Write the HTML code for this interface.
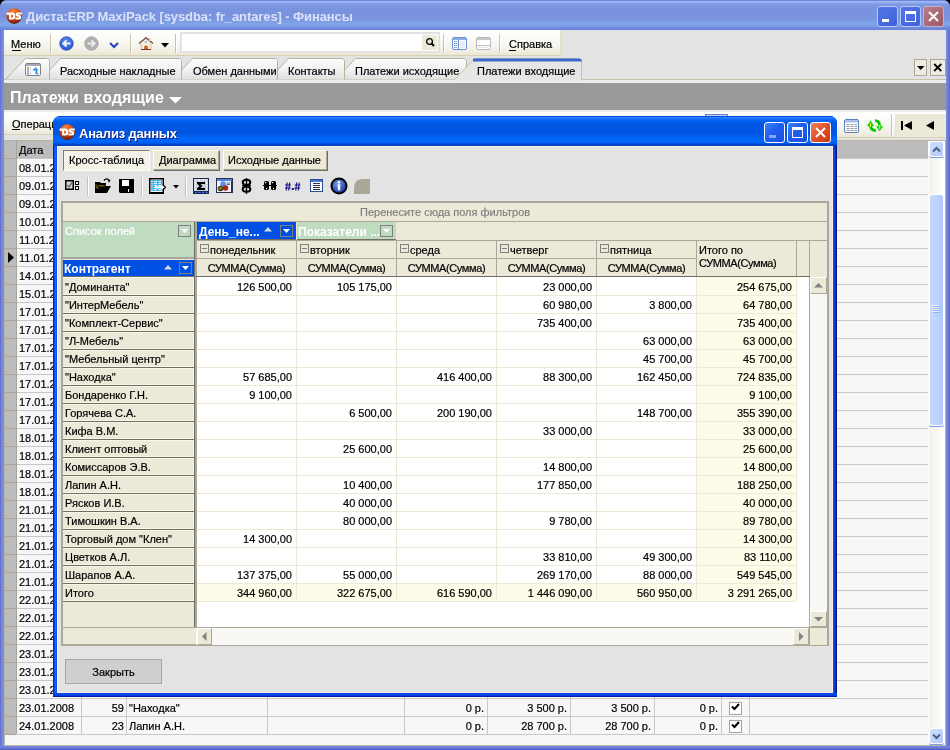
<!DOCTYPE html><html><head><meta charset="utf-8"><style>
*{box-sizing:border-box;margin:0;padding:0}
html,body{width:950px;height:750px;overflow:hidden;background:#fff}
body{position:relative;font:11px "Liberation Sans",sans-serif;color:#000;will-change:transform}
.a{position:absolute}
.t{position:absolute;white-space:pre;line-height:13px;-webkit-text-stroke:0.2px}
.r{text-align:right}
.tb{background:linear-gradient(to bottom,#fefefe 0%,#fbfbf8 35%,#f1efe3 85%,#e9e6d3 100%)}
.sep{position:absolute;width:2px;background:linear-gradient(to right,#c5c2b2 50%,#fff 50%)}
.xb{position:absolute;width:21px;height:21px;border-radius:3px;border:1px solid #fff}
</style></head><body>
<div class="a" style="left:0;top:0;width:950px;height:750px;background:#000"></div>
<div class="a" style="left:0;top:0;width:950px;height:750px;border-radius:7px 7px 0 0;background:linear-gradient(to right,#5868cc 0,#6f80da 1px,#7b8ee0 3px,#7b8ee0 946px,#5a6ad0 950px)"></div>
<div class="a" style="left:0;top:746px;width:950px;height:4px;background:linear-gradient(to bottom,#7486e0 0,#6a7ad8 2px,#4c56bc 4px)"></div>
<div class="a" style="left:0;top:0;width:950px;height:30px;border-radius:7px 7px 0 0;background:linear-gradient(to bottom,#6b86da 0,#6b86da 1px,#a4bcf2 1px,#94aeee 2.5px,#7f9ae4 4px,#7a93df 7px,#7a93df 17px,#7c9ae2 21px,#80a6ea 24px,#7c9ee6 26px,#6f88dc 28px,#6a80d8 30px)"></div>
<svg class="a" style="left:6px;top:8px" width="17" height="17" viewBox="0 0 17 17"><defs><radialGradient id="dsg6_8" cx="0.42" cy="0.2" r="0.8"><stop offset="0" stop-color="#f8843a"/><stop offset="0.55" stop-color="#d24a12"/><stop offset="1" stop-color="#6a1a06"/></radialGradient></defs><circle cx="8.2" cy="8.1" r="7.8" fill="url(#dsg6_8)"/><path d="M0.6 4.6H6.6Q9.3 4.6 9.3 8.1T6.6 11.6H3.1V6.7H0.6z M5.1 6.7V9.5H6.2Q7.1 9.5 7.1 8.1T6.2 6.7z" fill="#fff" fill-rule="evenodd"/><path d="M15.8 4.6H11.6Q9.6 4.6 9.6 6.4T11.6 8.7H12.7Q13.1 8.7 13.1 9.1T12.7 9.6H9.4V11.6H13.2Q15.3 11.6 15.3 9.3T13.2 7H12.3Q11.9 7 11.9 6.7T12.3 6.5H15.8z" fill="#fff"/></svg>
<div class="t" style="left:26px;top:9px;font:bold 13px 'Liberation Sans',sans-serif;line-height:15px;color:#d8e2f8;letter-spacing:-0.1px;-webkit-text-stroke:0">Диста:ERP MaxiPack [sysdba: fr_antares] - Финансы</div>
<div class="xb" style="left:877px;top:6px;background:linear-gradient(135deg,#4f74e4 0%,#4a6ee0 50%,#3d62d8 100%);border-color:#b8c8f4"><div class="a" style="left:4px;top:12px;width:7px;height:3px;background:#fff"></div></div><div class="xb" style="left:900px;top:6px;background:linear-gradient(135deg,#4f74e4 0%,#4a6ee0 50%,#3d62d8 100%);border-color:#b8c8f4"><div class="a" style="left:4px;top:4px;width:11px;height:11px;border:1px solid #fff;border-top-width:3px"></div></div><div class="xb" style="left:923px;top:6px;background:linear-gradient(135deg,#b8808c 0%,#a86670 60%,#9a5a66 100%);border-color:#c8b0c0"><svg class="a" style="left:4px;top:4px" width="11" height="11"><path d="M1 1L10 10M10 1L1 10" stroke="#fff" stroke-width="2"/></svg></div>
<div class="a" style="left:4px;top:30px;width:942px;height:716px;background:#e3e3e3"></div>
<div class="a tb" style="left:4px;top:30px;width:557px;height:26px;border-bottom:1px solid #d8d2b4;border-right:1px solid #e4e0cc"></div>
<div class="t" style="left:11px;top:38px">Меню</div><div class="a" style="left:12px;top:50px;width:9px;height:1px;background:#000"></div>
<div class="sep" style="left:50px;top:34px;height:19px"></div>
<svg class="a" style="left:59px;top:36px" width="16" height="16" viewBox="0 0 16 16"><defs><radialGradient id="bk" cx=".45" cy=".35" r=".75"><stop offset="0" stop-color="#5a8cf0"/><stop offset="1" stop-color="#2050c8"/></radialGradient></defs><circle cx="7.5" cy="7.5" r="6.8" fill="url(#bk)" stroke="#2a48b0" stroke-width=".7"/><path d="M11.5 7.5H4.5M7.5 4.3L4.3 7.5L7.5 10.7" stroke="#f0f4ff" stroke-width="1.9" fill="none"/></svg>
<svg class="a" style="left:84px;top:36px" width="16" height="16" viewBox="0 0 16 16"><circle cx="7.5" cy="7.5" r="6.8" fill="#b0b0b0" stroke="#a0a0a0" stroke-width=".7"/><path d="M3.5 7.5H10.5M7.5 4.3L10.7 7.5L7.5 10.7" stroke="#ececec" stroke-width="1.9" fill="none"/></svg>
<svg class="a" style="left:109px;top:42px" width="10" height="7"><path d="M1 1L5 5L9 1" stroke="#2040c0" stroke-width="2" fill="none"/></svg>
<div class="sep" style="left:130px;top:34px;height:19px"></div>
<svg class="a" style="left:138px;top:37px" width="16" height="13" viewBox="0 0 16 13"><path d="M3 6V12.5H13V6L8 1.5z" fill="#f8ecd8"/><path d="M1 6.5L8 0.8L15 6.5" stroke="#6a4a48" stroke-width="1.4" fill="none"/><rect x="11" y="1" width="2" height="3" fill="#e8d0c0"/><rect x="6.8" y="4" width="2.4" height="2" fill="#a0c8f0"/><path d="M6.2 12.5V9.5Q8 7.5 9.8 9.5V12.5z" fill="#c06020"/><path d="M3 12.5H13" stroke="#8a3020"/><path d="M3 6.5V12M13 6.5V12" stroke="#d8c0a0"/></svg>
<svg class="a" style="left:161px;top:43px" width="8" height="5"><path d="M0 0H8L4 4.5z" fill="#000"/></svg>
<div class="sep" style="left:175px;top:34px;height:19px"></div>
<div class="a" style="left:180px;top:32px;width:260px;height:21px;background:#fff;border:2px solid #e2e2e2"></div>
<div class="a" style="left:422px;top:35px;width:15px;height:15px;background:#ece9d8"></div>
<svg class="a" style="left:425px;top:37px" width="10" height="10"><circle cx="4.5" cy="4.5" r="2.9" stroke="#000" stroke-width="1.3" fill="none"/><path d="M6.5 6.5L9 9" stroke="#000" stroke-width="2"/></svg>
<div class="sep" style="left:443px;top:34px;height:19px"></div>
<svg class="a" style="left:452px;top:37px" width="15" height="13"><rect x=".5" y=".5" width="14" height="12" rx="1.5" fill="#fff" stroke="#6a8ed0"/><rect x="1" y="1" width="13" height="2" fill="#8eacE2"/><path d="M6.5 3V12" stroke="#6a8ed0"/><rect x="8" y="4" width="5" height="7" fill="#e8eef8"/><path d="M2 4.5h1.2M2 6.5h1.2M2 8.5h1.2M2 10.5h1.2" stroke="#3a90f0"/><path d="M3.4 4.5h1.6M3.4 6.5h1.6M3.4 8.5h1.6M3.4 10.5h1.6" stroke="#a0a0a0"/></svg>
<svg class="a" style="left:476px;top:37px" width="15" height="13"><rect x=".5" y=".5" width="14" height="12" rx="1.5" fill="#fdfdfd" stroke="#b8b8b8"/><rect x="1" y="1" width="13" height="2" fill="#c8c8c8"/><path d="M1 8.5H14" stroke="#c0c0c0"/><path d="M3 10.5h9" stroke="#d0d0d0" stroke-dasharray="1 1"/></svg>
<div class="sep" style="left:499px;top:34px;height:19px"></div>
<div class="t" style="left:509px;top:38px">Справка</div><div class="a" style="left:509px;top:50px;width:7px;height:1px;background:#000"></div>
<div class="a" style="left:4px;top:79px;width:942px;height:1px;background:#c8c3a8"></div>
<div class="a" style="left:4px;top:80px;width:942px;height:3px;background:#ededed"></div>
<svg class="a" style="left:335px;top:58px;overflow:visible" width="133" height="23"><defs><linearGradient id="tg" x1="0" y1="0" x2="0" y2="1"><stop offset="0" stop-color="#fcfcfc"/><stop offset=".5" stop-color="#f2f2f2"/><stop offset="1" stop-color="#e0e0e0"/></linearGradient></defs><path d="M0.5 21.5 L20.5 0.5 H129.5 L131.5 2.5 V21.5" fill="url(#tg)" stroke="#b8b29a"/></svg>
<svg class="a" style="left:268px;top:58px;overflow:visible" width="78" height="23"><defs><linearGradient id="tg" x1="0" y1="0" x2="0" y2="1"><stop offset="0" stop-color="#fcfcfc"/><stop offset=".5" stop-color="#f2f2f2"/><stop offset="1" stop-color="#e0e0e0"/></linearGradient></defs><path d="M0.5 21.5 L20.5 0.5 H74.5 L76.5 2.5 V21.5" fill="url(#tg)" stroke="#b8b29a"/></svg>
<svg class="a" style="left:172px;top:58px;overflow:visible" width="107" height="23"><defs><linearGradient id="tg" x1="0" y1="0" x2="0" y2="1"><stop offset="0" stop-color="#fcfcfc"/><stop offset=".5" stop-color="#f2f2f2"/><stop offset="1" stop-color="#e0e0e0"/></linearGradient></defs><path d="M0.5 21.5 L20.5 0.5 H103.5 L105.5 2.5 V21.5" fill="url(#tg)" stroke="#b8b29a"/></svg>
<svg class="a" style="left:40px;top:58px;overflow:visible" width="143" height="23"><defs><linearGradient id="tg" x1="0" y1="0" x2="0" y2="1"><stop offset="0" stop-color="#fcfcfc"/><stop offset=".5" stop-color="#f2f2f2"/><stop offset="1" stop-color="#e0e0e0"/></linearGradient></defs><path d="M0.5 21.5 L20.5 0.5 H139.5 L141.5 2.5 V21.5" fill="url(#tg)" stroke="#b8b29a"/></svg>
<svg class="a" style="left:5px;top:58px;overflow:visible" width="46" height="23"><defs><linearGradient id="tg" x1="0" y1="0" x2="0" y2="1"><stop offset="0" stop-color="#fcfcfc"/><stop offset=".5" stop-color="#f2f2f2"/><stop offset="1" stop-color="#e0e0e0"/></linearGradient></defs><path d="M0.5 21.5 L20.5 0.5 H42.5 L44.5 2.5 V21.5" fill="url(#tg)" stroke="#b8b29a"/></svg>
<svg class="a" style="left:454px;top:58px;overflow:visible" width="129" height="23"><defs><linearGradient id="tg" x1="0" y1="0" x2="0" y2="1"><stop offset="0" stop-color="#fcfcfc"/><stop offset=".5" stop-color="#f2f2f2"/><stop offset="1" stop-color="#e0e0e0"/></linearGradient></defs><path d="M0.5 21.5 L20.5 0.5 H125.5 L127.5 2.5 V21.5" fill="#e6e6e6" stroke="#c8c3a8"/><path d="M19 3.5V0.5H125Q128 0.5 128 3.5z" fill="#3a68cc"/><rect x="1" y="21" width="126" height="2" fill="#e6e6e6"/></svg>
<div class="t" style="left:60px;top:65px">Расходные накладные</div>
<div class="t" style="left:193px;top:65px">Обмен данными</div>
<div class="t" style="left:288px;top:65px">Контакты</div>
<div class="t" style="left:355px;top:65px">Платежи исходящие</div>
<div class="t" style="left:477px;top:65px">Платежи входящие</div>
<svg class="a" style="left:25px;top:63px" width="16" height="13"><rect x=".5" y=".5" width="15" height="12" rx="1.2" fill="#fff" stroke="#808080"/><rect x="1" y="1" width="14" height="2" fill="#a8a8b0"/><circle cx="3" cy="4.9" r=".8" fill="#20a020"/><circle cx="3" cy="6.9" r=".8" fill="#c04040"/><circle cx="3" cy="8.9" r=".8" fill="#4080f0"/><circle cx="3" cy="10.8" r=".8" fill="#404040"/><path d="M4.5 4.9h2M4.5 6.9h1.5M4.5 8.9h2M4.5 10.8h2" stroke="#c8c8c8" stroke-width=".8"/><path d="M7.3 7.5L10.5 4L13.6 7.5H12V9.5L14 11.3H10.5V7.5z" fill="#2888d8"/><path d="M10.5 4.8V9" stroke="#60c8f8" stroke-width=".8"/></svg>
<div class="a" style="left:914px;top:59px;width:13px;height:17px;background:#efecdf;border:1px solid #aca899"></div>
<svg class="a" style="left:917px;top:66px" width="8" height="5"><path d="M0 0H7.5L3.75 4z" fill="#000"/></svg>
<div class="a" style="left:930px;top:59px;width:16px;height:17px;background:#efecdf;border:1px solid #aca899"></div>
<svg class="a" style="left:933px;top:63px" width="10" height="9"><path d="M1.2 1L8.3 8M8.3 1L1.2 8" stroke="#000" stroke-width="1.8"/></svg>
<div class="a" style="left:4px;top:83px;width:942px;height:27px;background:#999999"></div>
<div class="t" style="left:10px;top:89px;font:bold 16px 'Liberation Sans',sans-serif;line-height:18px;color:#fff;-webkit-text-stroke:0;letter-spacing:0.1px">Платежи входящие</div>
<svg class="a" style="left:169px;top:97px" width="14" height="7"><path d="M0 0H13L6.5 6.5z" fill="#fff"/></svg>
<div class="a" style="left:4px;top:110px;width:942px;height:2px;background:#ececec"></div>
<div class="a" style="left:4px;top:135px;width:942px;height:5px;background:#e3e3e3"></div>
<div class="a tb" style="left:4px;top:112px;width:457px;height:23px;border-bottom:1px solid #d8d2b4"></div>
<div class="a tb" style="left:461px;top:112px;width:485px;height:26px;border-bottom:1px solid #d8d2b4"></div>
<div class="sep" style="left:891px;top:114px;height:22px"></div>
<div class="a" style="left:895px;top:114px;width:51px;height:23px;background:linear-gradient(to right,#e8e5d2,#ece9d8 3px)"></div>
<div class="t" style="left:12px;top:118px">Операции</div><div class="a" style="left:12px;top:129px;width:8px;height:1px;background:#000"></div>
<svg class="a" style="left:844px;top:119px" width="15" height="14"><rect x=".5" y=".5" width="14" height="13" rx="1.5" fill="#fff" stroke="#5a80c0"/><rect x="1" y="1" width="13" height="2.5" fill="#a8c0e8"/><path d="M2.5 5.5h3M6.5 5.5h3M10.5 5.5h2.5M2.5 7.5h3M6.5 7.5h3M10.5 7.5h2.5M2.5 9.5h3M6.5 9.5h3M10.5 9.5h2.5M2.5 11.5h3M6.5 11.5h3M10.5 11.5h2.5" stroke="#9098a8"/></svg>
<svg class="a" style="left:862px;top:114px" width="26" height="22" viewBox="0 0 26 22"><path d="M8.5 11.5Q8.5 16.3 13.8 16.5" stroke="#00c800" stroke-width="2.8" fill="none"/><path d="M4.8 12.3L8.5 6.6L12.2 12.3z" fill="#10d010"/><path d="M13.2 6.6Q17.5 6.8 17.7 12" stroke="#00c800" stroke-width="2.8" fill="none"/><path d="M14 12.2L17.6 17.2L21.2 12.2z" fill="#10d010"/><path d="M8.5 9V13" stroke="#c8f800" stroke-width="1.2"/><path d="M17.6 11V15" stroke="#c8f800" stroke-width="1.2"/></svg>
<svg class="a" style="left:901px;top:121px" width="12" height="9"><rect x="0" y="0" width="2" height="9" fill="#000"/><path d="M11 0V9L3 4.5z" fill="#000"/></svg>
<svg class="a" style="left:926px;top:121px" width="9" height="9"><path d="M8 0V9L0 4.5z" fill="#000"/></svg>
<div class="a" style="left:4px;top:140px;width:924px;height:594px;background:#f7f7f7"></div>
<div class="a" style="left:4px;top:140px;width:942px;height:1px;background:#b8b4a0"></div>
<div class="a" style="left:4px;top:141px;width:924px;height:17px;background:#bcbcbc"></div>
<div class="a" style="left:4px;top:141px;width:12px;height:593px;background:#bcbcbc"></div>
<div class="t" style="left:19px;top:144px">Дата</div>
<div class="a" style="left:4px;top:158px;width:12px;height:1px;background:#a8a498"></div>
<div class="a" style="left:17px;top:158px;width:911px;height:1px;background:#c8c8c8"></div>
<div class="a" style="left:4px;top:176px;width:12px;height:1px;background:#a8a498"></div>
<div class="a" style="left:17px;top:176px;width:911px;height:1px;background:#c8c8c8"></div>
<div class="a" style="left:4px;top:194px;width:12px;height:1px;background:#a8a498"></div>
<div class="a" style="left:17px;top:194px;width:911px;height:1px;background:#c8c8c8"></div>
<div class="a" style="left:4px;top:212px;width:12px;height:1px;background:#a8a498"></div>
<div class="a" style="left:17px;top:212px;width:911px;height:1px;background:#c8c8c8"></div>
<div class="a" style="left:4px;top:230px;width:12px;height:1px;background:#a8a498"></div>
<div class="a" style="left:17px;top:230px;width:911px;height:1px;background:#c8c8c8"></div>
<div class="a" style="left:4px;top:248px;width:12px;height:1px;background:#a8a498"></div>
<div class="a" style="left:17px;top:248px;width:911px;height:1px;background:#c8c8c8"></div>
<div class="a" style="left:4px;top:266px;width:12px;height:1px;background:#a8a498"></div>
<div class="a" style="left:17px;top:266px;width:911px;height:1px;background:#c8c8c8"></div>
<div class="a" style="left:4px;top:284px;width:12px;height:1px;background:#a8a498"></div>
<div class="a" style="left:17px;top:284px;width:911px;height:1px;background:#c8c8c8"></div>
<div class="a" style="left:4px;top:302px;width:12px;height:1px;background:#a8a498"></div>
<div class="a" style="left:17px;top:302px;width:911px;height:1px;background:#c8c8c8"></div>
<div class="a" style="left:4px;top:320px;width:12px;height:1px;background:#a8a498"></div>
<div class="a" style="left:17px;top:320px;width:911px;height:1px;background:#c8c8c8"></div>
<div class="a" style="left:4px;top:338px;width:12px;height:1px;background:#a8a498"></div>
<div class="a" style="left:17px;top:338px;width:911px;height:1px;background:#c8c8c8"></div>
<div class="a" style="left:4px;top:356px;width:12px;height:1px;background:#a8a498"></div>
<div class="a" style="left:17px;top:356px;width:911px;height:1px;background:#c8c8c8"></div>
<div class="a" style="left:4px;top:374px;width:12px;height:1px;background:#a8a498"></div>
<div class="a" style="left:17px;top:374px;width:911px;height:1px;background:#c8c8c8"></div>
<div class="a" style="left:4px;top:392px;width:12px;height:1px;background:#a8a498"></div>
<div class="a" style="left:17px;top:392px;width:911px;height:1px;background:#c8c8c8"></div>
<div class="a" style="left:4px;top:410px;width:12px;height:1px;background:#a8a498"></div>
<div class="a" style="left:17px;top:410px;width:911px;height:1px;background:#c8c8c8"></div>
<div class="a" style="left:4px;top:428px;width:12px;height:1px;background:#a8a498"></div>
<div class="a" style="left:17px;top:428px;width:911px;height:1px;background:#c8c8c8"></div>
<div class="a" style="left:4px;top:446px;width:12px;height:1px;background:#a8a498"></div>
<div class="a" style="left:17px;top:446px;width:911px;height:1px;background:#c8c8c8"></div>
<div class="a" style="left:4px;top:464px;width:12px;height:1px;background:#a8a498"></div>
<div class="a" style="left:17px;top:464px;width:911px;height:1px;background:#c8c8c8"></div>
<div class="a" style="left:4px;top:482px;width:12px;height:1px;background:#a8a498"></div>
<div class="a" style="left:17px;top:482px;width:911px;height:1px;background:#c8c8c8"></div>
<div class="a" style="left:4px;top:500px;width:12px;height:1px;background:#a8a498"></div>
<div class="a" style="left:17px;top:500px;width:911px;height:1px;background:#c8c8c8"></div>
<div class="a" style="left:4px;top:518px;width:12px;height:1px;background:#a8a498"></div>
<div class="a" style="left:17px;top:518px;width:911px;height:1px;background:#c8c8c8"></div>
<div class="a" style="left:4px;top:536px;width:12px;height:1px;background:#a8a498"></div>
<div class="a" style="left:17px;top:536px;width:911px;height:1px;background:#c8c8c8"></div>
<div class="a" style="left:4px;top:554px;width:12px;height:1px;background:#a8a498"></div>
<div class="a" style="left:17px;top:554px;width:911px;height:1px;background:#c8c8c8"></div>
<div class="a" style="left:4px;top:572px;width:12px;height:1px;background:#a8a498"></div>
<div class="a" style="left:17px;top:572px;width:911px;height:1px;background:#c8c8c8"></div>
<div class="a" style="left:4px;top:590px;width:12px;height:1px;background:#a8a498"></div>
<div class="a" style="left:17px;top:590px;width:911px;height:1px;background:#c8c8c8"></div>
<div class="a" style="left:4px;top:608px;width:12px;height:1px;background:#a8a498"></div>
<div class="a" style="left:17px;top:608px;width:911px;height:1px;background:#c8c8c8"></div>
<div class="a" style="left:4px;top:626px;width:12px;height:1px;background:#a8a498"></div>
<div class="a" style="left:17px;top:626px;width:911px;height:1px;background:#c8c8c8"></div>
<div class="a" style="left:4px;top:644px;width:12px;height:1px;background:#a8a498"></div>
<div class="a" style="left:17px;top:644px;width:911px;height:1px;background:#c8c8c8"></div>
<div class="a" style="left:4px;top:662px;width:12px;height:1px;background:#a8a498"></div>
<div class="a" style="left:17px;top:662px;width:911px;height:1px;background:#c8c8c8"></div>
<div class="a" style="left:4px;top:680px;width:12px;height:1px;background:#a8a498"></div>
<div class="a" style="left:17px;top:680px;width:911px;height:1px;background:#c8c8c8"></div>
<div class="a" style="left:4px;top:698px;width:12px;height:1px;background:#a8a498"></div>
<div class="a" style="left:17px;top:698px;width:911px;height:1px;background:#c8c8c8"></div>
<div class="a" style="left:4px;top:716px;width:12px;height:1px;background:#a8a498"></div>
<div class="a" style="left:17px;top:716px;width:911px;height:1px;background:#c8c8c8"></div>
<div class="a" style="left:4px;top:734px;width:12px;height:1px;background:#a8a498"></div>
<div class="a" style="left:17px;top:734px;width:911px;height:1px;background:#c8c8c8"></div>
<div class="a" style="left:16px;top:141px;width:1px;height:593px;background:#a8a498"></div>
<div class="a" style="left:81px;top:158px;width:1px;height:576px;background:#c8c8c8"></div>
<div class="a" style="left:126px;top:158px;width:1px;height:576px;background:#c8c8c8"></div>
<div class="a" style="left:267px;top:158px;width:1px;height:576px;background:#c8c8c8"></div>
<div class="a" style="left:404px;top:158px;width:1px;height:576px;background:#c8c8c8"></div>
<div class="a" style="left:487px;top:158px;width:1px;height:576px;background:#c8c8c8"></div>
<div class="a" style="left:570px;top:158px;width:1px;height:576px;background:#c8c8c8"></div>
<div class="a" style="left:654px;top:158px;width:1px;height:576px;background:#c8c8c8"></div>
<div class="a" style="left:721px;top:158px;width:1px;height:576px;background:#c8c8c8"></div>
<div class="a" style="left:749px;top:158px;width:1px;height:576px;background:#c8c8c8"></div>
<div class="t" style="left:19px;top:162px">08.01.2008</div>
<div class="t" style="left:19px;top:180px">09.01.2008</div>
<div class="t" style="left:19px;top:198px">09.01.2008</div>
<div class="t" style="left:19px;top:216px">10.01.2008</div>
<div class="t" style="left:19px;top:234px">11.01.2008</div>
<div class="t" style="left:19px;top:252px">11.01.2008</div>
<div class="t" style="left:19px;top:270px">14.01.2008</div>
<div class="t" style="left:19px;top:288px">15.01.2008</div>
<div class="t" style="left:19px;top:306px">17.01.2008</div>
<div class="t" style="left:19px;top:324px">17.01.2008</div>
<div class="t" style="left:19px;top:342px">17.01.2008</div>
<div class="t" style="left:19px;top:360px">17.01.2008</div>
<div class="t" style="left:19px;top:378px">17.01.2008</div>
<div class="t" style="left:19px;top:396px">17.01.2008</div>
<div class="t" style="left:19px;top:414px">17.01.2008</div>
<div class="t" style="left:19px;top:432px">18.01.2008</div>
<div class="t" style="left:19px;top:450px">18.01.2008</div>
<div class="t" style="left:19px;top:468px">18.01.2008</div>
<div class="t" style="left:19px;top:486px">18.01.2008</div>
<div class="t" style="left:19px;top:504px">21.01.2008</div>
<div class="t" style="left:19px;top:522px">21.01.2008</div>
<div class="t" style="left:19px;top:540px">21.01.2008</div>
<div class="t" style="left:19px;top:558px">21.01.2008</div>
<div class="t" style="left:19px;top:576px">21.01.2008</div>
<div class="t" style="left:19px;top:594px">22.01.2008</div>
<div class="t" style="left:19px;top:612px">22.01.2008</div>
<div class="t" style="left:19px;top:630px">22.01.2008</div>
<div class="t" style="left:19px;top:648px">23.01.2008</div>
<div class="t" style="left:19px;top:666px">23.01.2008</div>
<div class="t" style="left:19px;top:684px">23.01.2008</div>
<div class="t" style="left:19px;top:702px">23.01.2008</div>
<div class="t" style="left:19px;top:720px">24.01.2008</div>
<svg class="a" style="left:8px;top:252px" width="6" height="11"><path d="M0 0L6 5.5L0 11z" fill="#000"/></svg>
<div class="t r" style="left:82px;top:702px;width:42px">59</div>
<div class="t" style="left:129px;top:702px">"Находка"</div>
<div class="t r" style="left:404px;top:702px;width:80px">0 р.</div>
<div class="t r" style="left:487px;top:702px;width:80px">3 500 р.</div>
<div class="t r" style="left:570px;top:702px;width:81px">3 500 р.</div>
<div class="t r" style="left:654px;top:702px;width:64px">0 р.</div>
<div class="a" style="left:729px;top:702px;width:13px;height:13px;background:#fff;border:1px solid #a8a490"></div>
<svg class="a" style="left:731px;top:703px" width="9" height="8"><path d="M1 3.5L3.5 6L8 1" stroke="#000" stroke-width="2" fill="none"/></svg>
<div class="t r" style="left:82px;top:720px;width:42px">23</div>
<div class="t" style="left:129px;top:720px">Лапин А.Н.</div>
<div class="t r" style="left:404px;top:720px;width:80px">0 р.</div>
<div class="t r" style="left:487px;top:720px;width:80px">28 700 р.</div>
<div class="t r" style="left:570px;top:720px;width:81px">28 700 р.</div>
<div class="t r" style="left:654px;top:720px;width:64px">0 р.</div>
<div class="a" style="left:729px;top:720px;width:13px;height:13px;background:#fff;border:1px solid #a8a490"></div>
<svg class="a" style="left:731px;top:721px" width="9" height="8"><path d="M1 3.5L3.5 6L8 1" stroke="#000" stroke-width="2" fill="none"/></svg>
<div class="a" style="left:928px;top:640px;width:1px;height:17px;background:#000"></div>
<div class="a" style="left:4px;top:735px;width:924px;height:10px;background:#f7f7f7"></div>
<div class="a" style="left:4px;top:745px;width:942px;height:1px;background:#b8b4a0"></div>
<div class="a" style="left:4px;top:140px;width:1px;height:606px;background:#b8b4a0"></div>
<div class="a" style="left:928px;top:141px;width:17px;height:604px;background:linear-gradient(to right,#fefefe 0,#f3f1ea 2px,#f5f3ee 5px,#fdfdfb 13px,#fefefe 17px)"></div>
<div class="a" style="left:945px;top:140px;width:1px;height:606px;background:#b8b4a0"></div>
<div class="a" style="left:929px;top:141px;width:15px;height:16px;border-radius:2px;background:#fff;box-shadow:0 1px 0 #7a9ee0"></div><div class="a" style="left:930px;top:142px;width:13px;height:14px;border-radius:2px;background:linear-gradient(135deg,#d2e0fe 0%,#c2d4fc 50%,#b0c8f8 100%)"></div><svg class="a" style="left:932px;top:146px" width="9" height="7"><path d="M1 5.5L4.5 2L8 5.5" stroke="#4d6185" stroke-width="2" fill="none"/></svg>
<div class="a" style="left:929px;top:728px;width:15px;height:16px;border-radius:2px;background:#fff;box-shadow:0 1px 0 #7a9ee0"></div><div class="a" style="left:930px;top:729px;width:13px;height:14px;border-radius:2px;background:linear-gradient(135deg,#d2e0fe 0%,#c2d4fc 50%,#b0c8f8 100%)"></div><svg class="a" style="left:932px;top:733px" width="9" height="7"><path d="M1 1.5L4.5 5L8 1.5" stroke="#4d6185" stroke-width="2" fill="none"/></svg>
<div class="a" style="left:929px;top:194px;width:15px;height:232px;border-radius:2px;background:#fff;box-shadow:0 1px 0 #7a9ee0"></div>
<div class="a" style="left:930px;top:195px;width:13px;height:230px;border-radius:2px;background:linear-gradient(to right,#c6d8fc 0,#bcd2fd 60%,#b0c8f8 100%)"></div>
<svg class="a" style="left:932px;top:305px" width="8" height="8"><path d="M0 .5H7M0 2.5H7M0 4.5H7M0 6.5H7" stroke="#eef4ff"/><path d="M1 1.5H8M1 3.5H8M1 5.5H8M1 7.5H8" stroke="#8cb0f8"/></svg>
<div class="a" style="left:705px;top:114px;width:23px;height:3px;border:1px solid #6080d0;border-bottom:none;background:#c8d4f0"></div>
<div class="a" style="left:53px;top:116px;width:784px;height:581px;border-radius:7px 7px 0 0;background:linear-gradient(to right,#0024d4 0,#0024d4 1px,#0846f0 1px,#0846f0 2px,#1a66fa 2px,#1a66fa 3px,#0a52ee 3px,#0a52ee 4px,#0a46f0 4px,#0a46f0 781px,#0838e0 782px,#0020b0 783px,#000c80 783px)"></div>
<div class="a" style="left:53px;top:693px;width:784px;height:4px;background:linear-gradient(to bottom,#0a46f0 0,#0a46f0 2px,#0030d0 3px,#000c80 4px)"></div>
<div class="a" style="left:53px;top:116px;width:784px;height:30px;border-radius:7px 7px 0 0;background:linear-gradient(to bottom,#0048d8 0,#0048d8 1px,#3d8fff 1px,#1a70fa 2.5px,#0060f0 5px,#0056e2 8px,#0054e0 17px,#005cec 19.5px,#0066fa 22px,#0066fa 26px,#005cf0 27px,#0044c8 28.5px,#003cb8 30px)"></div>
<svg class="a" style="left:59px;top:124px" width="17" height="17" viewBox="0 0 17 17"><defs><radialGradient id="dsg59_124" cx="0.42" cy="0.2" r="0.8"><stop offset="0" stop-color="#f8843a"/><stop offset="0.55" stop-color="#d24a12"/><stop offset="1" stop-color="#6a1a06"/></radialGradient></defs><circle cx="8.2" cy="8.1" r="7.8" fill="url(#dsg59_124)"/><path d="M0.6 4.6H6.6Q9.3 4.6 9.3 8.1T6.6 11.6H3.1V6.7H0.6z M5.1 6.7V9.5H6.2Q7.1 9.5 7.1 8.1T6.2 6.7z" fill="#fff" fill-rule="evenodd"/><path d="M15.8 4.6H11.6Q9.6 4.6 9.6 6.4T11.6 8.7H12.7Q13.1 8.7 13.1 9.1T12.7 9.6H9.4V11.6H13.2Q15.3 11.6 15.3 9.3T13.2 7H12.3Q11.9 7 11.9 6.7T12.3 6.5H15.8z" fill="#fff"/></svg>
<div class="t" style="left:79px;top:126px;font:bold 13px 'Liberation Sans',sans-serif;line-height:15px;color:#fff;letter-spacing:-0.2px;-webkit-text-stroke:0;text-shadow:1px 1px #0a1e80">Анализ данных</div>
<div class="xb" style="left:764px;top:122px;background:linear-gradient(135deg,#3c80f8 0%,#1f5ef0 45%,#1a50e0 100%);border-color:#fff"><div class="a" style="left:4px;top:12px;width:7px;height:3px;background:#8aa8f0"></div></div><div class="xb" style="left:787px;top:122px;background:linear-gradient(135deg,#3c80f8 0%,#1f5ef0 45%,#1a50e0 100%);border-color:#fff"><div class="a" style="left:4px;top:4px;width:11px;height:11px;border:1px solid #fff;border-top-width:3px"></div></div><div class="xb" style="left:810px;top:122px;background:linear-gradient(135deg,#f08060 0%,#e0502a 50%,#c83a10 100%);border-color:#fff"><svg class="a" style="left:4px;top:4px" width="11" height="11"><path d="M1 1L10 10M10 1L1 10" stroke="#fff" stroke-width="2"/></svg></div>
<div class="a" style="left:57px;top:146px;width:776px;height:547px;background:#e3e3e3;border:1px solid;border-color:#f8f4e8 #f4f0e0 #f4f0e0 #f8f4e8"></div>
<div class="a" style="left:63px;top:150px;width:87px;height:21px;border:1px solid;border-color:#808070 #fff #fff #808070;background:repeating-conic-gradient(#fbfbf8 0 25%,#ece9d8 0 50%) 0 0/2px 2px"></div>
<div class="t" style="left:69px;top:154px">Кросс-таблица</div>
<div class="a" style="left:153px;top:150px;width:66px;height:20px;background:#ece9d8;border:1px solid;border-color:#fff #aca899 #aca899 #fff;box-shadow:1px 1px 0 #716f64"></div><div class="t" style="left:159px;top:154px">Диаграмма</div>
<div class="a" style="left:223px;top:150px;width:104px;height:20px;background:#ece9d8;border:1px solid;border-color:#fff #aca899 #aca899 #fff;box-shadow:1px 1px 0 #716f64"></div><div class="t" style="left:228px;top:154px">Исходные данные</div>
<svg class="a" style="left:65px;top:180px" width="15" height="11"><rect x="0" y="0" width="9" height="10" fill="#000"/><rect x="1.5" y="1.5" width="6" height="7" fill="#d8d8d8"/><path d="M2.5 5L4 7L7 2.5" stroke="#707070" stroke-width="1.4" fill="none"/><rect x="10" y="1" width="4" height="4" fill="#000"/><rect x="11" y="2" width="2" height="2" fill="#fff"/><rect x="10" y="6" width="4" height="4" fill="#000"/><rect x="11" y="7" width="2" height="2" fill="#fff"/></svg>
<div class="sep" style="left:87px;top:177px;height:19px"></div>
<svg class="a" style="left:95px;top:178px" width="17" height="16"><path d="M0 4H5L6 5H11V8H16L12 15H0z" fill="#000"/><path d="M1 6.5L3 8.5L4.5 7L6 8.5L7.5 7L9 8.5L10.5 7" stroke="#f0e000" stroke-width="1" fill="none" stroke-dasharray="1 .6"/><path d="M1 8.5L3 10.5" stroke="#f0e000" stroke-width="1"/><path d="M9 2.5Q11 0 13.5 1.5" stroke="#000" stroke-width="1.3" fill="none"/><path d="M12.5 1L15.5 2L14 5z" fill="#000"/></svg>
<svg class="a" style="left:119px;top:179px" width="15" height="15"><path d="M0 0H15V14H1L0 13z" fill="#000"/><rect x="3" y="1" width="7" height="6" fill="#fff"/><rect x="9" y="10" width="1" height="3" fill="#fff"/></svg>
<div class="sep" style="left:141px;top:177px;height:19px"></div>
<svg class="a" style="left:149px;top:178px" width="17" height="16"><rect x=".75" y=".75" width="13.5" height="14" fill="#fff" stroke="#000" stroke-width="1.5"/><rect x="0" y="14" width="15" height="2" fill="#000"/><rect x="2" y="2" width="11" height="11" fill="#40b8f0"/><path d="M2.5 3.5h1M5 3.5h3M9.5 3.5h2.5M2.5 5.5h1M5 5.5h3M9.5 5.5h2.5M2.5 7.5h1M5 7.5h3M9.5 7.5h2.5M2.5 9.5h1M5 9.5h3M9.5 9.5h2.5M2.5 11.5h1M5 11.5h3M9.5 11.5h2.5" stroke="#e8f8ff"/><path d="M6 8.3H12.5V6.3L16 9.3L12.5 12.3V10.3H6z" fill="#fff"/><path d="M13.8 6.5L16.5 9.3L13.8 12" stroke="#000" stroke-width="1.2" fill="none"/></svg>
<svg class="a" style="left:173px;top:185px" width="6" height="4"><path d="M0 0H6L3 3.5z" fill="#000"/></svg>
<div class="sep" style="left:185px;top:177px;height:19px"></div>
<svg class="a" style="left:193px;top:178px" width="16" height="16"><rect x="0" y="0" width="16" height="16" fill="#1c2a48"/><rect x="1" y="1" width="14" height="12" fill="#c8d0dc"/><path d="M1.5 2h2M5 2h2M8.5 2h2M12 2h2M1.5 5h1.5M1.5 8h1.5M1.5 11h1.5M13 5h1.5M13 8h1.5M13 11h1.5" stroke="#f4f6fa" stroke-width="1.6"/><rect x="0" y="13" width="16" height="3" fill="#1a2a60"/><path d="M2 14.5h2M5.5 14.5h2M9 14.5h2M12.5 14.5h2" stroke="#4a70d0" stroke-width="1.2"/><path d="M4 4H12V6H7.5L9.5 8L7.5 10H12V12H4V10.5L6.5 8L4 5.5z" fill="#000"/></svg>
<svg class="a" style="left:216px;top:178px" width="17" height="15"><rect x="0" y="0" width="17" height="15" fill="#24324a"/><rect x="1" y="1" width="15" height="2" fill="#5080e0"/><rect x="1" y="3" width="14" height="11" fill="#f4f4f8"/><circle cx="7" cy="6" r="2.8" fill="#5a90f0"/><circle cx="4.5" cy="10.5" r="2.8" fill="#3a3010"/><circle cx="4.3" cy="10.3" r="1.8" fill="#8a7a20"/><circle cx="9.5" cy="10" r="2.8" fill="#a02818"/><path d="M10.5 5H14M10.5 6.5H14" stroke="#5a6aa0"/></svg>
<svg class="a" style="left:241px;top:178px" width="11" height="16"><path d="M5.5 0V16" stroke="#000" stroke-width="1.4"/><ellipse cx="5.5" cy="4.3" rx="3.8" ry="2.6" stroke="#000" stroke-width="2" fill="none"/><ellipse cx="5.5" cy="11.2" rx="3.8" ry="2.6" stroke="#000" stroke-width="2" fill="none"/><path d="M1 7.7H10" stroke="#000" stroke-width="1.2"/></svg>
<svg class="a" style="left:263px;top:180px" width="15" height="11"><rect x="1" y="1" width="5" height="9" rx="1.5" fill="#000"/><rect x="8" y="1" width="5" height="9" rx="1.5" fill="#000"/><path d="M0 5.5H14" stroke="#000"/><rect x="2" y="2" width="1.2" height="1.2" fill="#fff"/><rect x="3" y="8" width="1.2" height="1.2" fill="#fff"/><rect x="9" y="2" width="1.2" height="1.2" fill="#fff"/><rect x="10" y="8" width="1.2" height="1.2" fill="#fff"/></svg>
<svg class="a" style="left:285px;top:182px" width="16" height="9"><path d="M2.2 0.5L1.2 8.5M4.7 0.5L3.7 8.5M0.2 3H6M0 6H5.7" stroke="#101080" stroke-width="1.1"/><rect x="6.8" y="6" width="2" height="2" fill="#101080"/><path d="M11.7 0.5L10.7 8.5M14.2 0.5L13.2 8.5M9.7 3H15.5M9.5 6H15.2" stroke="#101080" stroke-width="1.1"/></svg>
<svg class="a" style="left:310px;top:179px" width="13" height="13"><rect x=".5" y=".5" width="12" height="12" fill="#fff" stroke="#2a4a90"/><rect x="1" y="1" width="11" height="2" fill="#4a78d8"/><path d="M3 4.5H10M3 6.5H10M3 8.5H10M3 10.5H10" stroke="#303050"/></svg>
<svg class="a" style="left:330px;top:177px" width="18" height="18"><defs><radialGradient id="ig" cx=".4" cy=".35" r=".7"><stop offset="0" stop-color="#7aa0f0"/><stop offset="1" stop-color="#1a36a0"/></radialGradient></defs><circle cx="9" cy="9" r="8.5" fill="#000"/><circle cx="9" cy="9" r="6.6" fill="url(#ig)"/><rect x="7.8" y="7.3" width="2.4" height="6" fill="#fff"/><circle cx="9" cy="5.2" r="1.3" fill="#fff"/></svg>
<svg class="a" style="left:354px;top:179px" width="16" height="15"><path d="M0 15V9Q0 0 9 0H16V15z" fill="#aca899"/></svg>
<div class="a" style="left:61px;top:201px;width:768px;height:445px;background:#ece9d8;border:2px solid #aca899"></div>
<div class="a" style="left:63px;top:221px;width:764px;height:1px;background:#aca899"></div>
<div class="t" style="left:360px;top:206px;color:#808080">Перенесите сюда поля фильтров</div>
<div class="a" style="left:196px;top:240px;width:631px;height:1px;background:#aca899"></div>
<div class="a" style="left:197px;top:277px;width:613px;height:351px;background:#fff"></div>
<div class="a" style="left:194px;top:222px;width:3px;height:406px;background:linear-gradient(to right,#716f64 0,#716f64 1px,#aca899 1px)"></div>
<div class="a" style="left:63px;top:222px;width:131px;height:35px;background:#c0dcc0"></div>
<div class="a" style="left:63px;top:257px;width:131px;height:3px;background:linear-gradient(#aca899 0,#aca899 2px,#ece9d8 2px)"></div>
<div class="t" style="left:65px;top:225px;color:#fff">Список полей</div>
<div class="a" style="left:178px;top:225px;width:13px;height:12px;border:1px solid #808080;background:#c0dcc0"></div><svg class="a" style="left:181px;top:229px" width="8" height="5"><path d="M0 0H7L3.5 4z" fill="#fff"/></svg>
<div class="a" style="left:63px;top:260px;width:131px;height:16px;background:#0050e6"></div>
<div class="t" style="left:64px;top:262px;font:bold 12px 'Liberation Sans',sans-serif;color:#fff;-webkit-text-stroke:0">Контрагент</div>
<svg class="a" style="left:164px;top:265px" width="9" height="5"><path d="M0 4.5H8L4 0z" fill="#d8d8e0"/></svg>
<div class="a" style="left:179px;top:262px;width:13px;height:12px;border:1px solid #808080;background:#0050e6"></div><svg class="a" style="left:182px;top:266px" width="8" height="5"><path d="M0 0H7L3.5 4z" fill="#fff"/></svg>
<div class="a" style="left:63px;top:276px;width:131px;height:1px;background:#716f64"></div>
<div class="a" style="left:197px;top:222px;width:99px;height:17px;background:#0050e6;box-shadow:0 1px 0 #716f64"></div>
<div class="t" style="left:199px;top:225px;font:bold 12px 'Liberation Sans',sans-serif;color:#fff;-webkit-text-stroke:0">День_не...</div>
<svg class="a" style="left:264px;top:227px" width="9" height="5"><path d="M0 4.5H8L4 0z" fill="#d8d8e0"/></svg>
<div class="a" style="left:280px;top:225px;width:13px;height:12px;border:1px solid #808080;background:#0050e6"></div><svg class="a" style="left:283px;top:229px" width="8" height="5"><path d="M0 0H7L3.5 4z" fill="#fff"/></svg>
<div class="a" style="left:297px;top:222px;width:99px;height:17px;background:#c0dcc0;box-shadow:0 1px 0 #716f64"></div>
<div class="t" style="left:298px;top:225px;font:bold 12px 'Liberation Sans',sans-serif;color:#fff;-webkit-text-stroke:0">Показатели ...</div>
<div class="a" style="left:380px;top:225px;width:13px;height:12px;border:1px solid #808080;background:#c0dcc0"></div><svg class="a" style="left:383px;top:229px" width="8" height="5"><path d="M0 0H7L3.5 4z" fill="#fff"/></svg>
<div class="a" style="left:296px;top:241px;width:1px;height:36px;background:#aca899"></div>
<div class="a" style="left:197px;top:258px;width:99px;height:1px;background:#aca899"></div>
<div class="a" style="left:200px;top:244px;width:9px;height:9px;border:1px solid #808080"></div><div class="a" style="left:202px;top:248px;width:5px;height:1px;background:#808080"></div>
<div class="t" style="left:210px;top:244px">понедельник</div>
<div class="t" style="left:197px;top:262px;width:99px;text-align:center;letter-spacing:-0.4px">СУММА(Сумма)</div>
<div class="a" style="left:396px;top:241px;width:1px;height:36px;background:#aca899"></div>
<div class="a" style="left:297px;top:258px;width:99px;height:1px;background:#aca899"></div>
<div class="a" style="left:300px;top:244px;width:9px;height:9px;border:1px solid #808080"></div><div class="a" style="left:302px;top:248px;width:5px;height:1px;background:#808080"></div>
<div class="t" style="left:310px;top:244px">вторник</div>
<div class="t" style="left:297px;top:262px;width:99px;text-align:center;letter-spacing:-0.4px">СУММА(Сумма)</div>
<div class="a" style="left:496px;top:241px;width:1px;height:36px;background:#aca899"></div>
<div class="a" style="left:397px;top:258px;width:99px;height:1px;background:#aca899"></div>
<div class="a" style="left:400px;top:244px;width:9px;height:9px;border:1px solid #808080"></div><div class="a" style="left:402px;top:248px;width:5px;height:1px;background:#808080"></div>
<div class="t" style="left:410px;top:244px">среда</div>
<div class="t" style="left:397px;top:262px;width:99px;text-align:center;letter-spacing:-0.4px">СУММА(Сумма)</div>
<div class="a" style="left:596px;top:241px;width:1px;height:36px;background:#aca899"></div>
<div class="a" style="left:497px;top:258px;width:99px;height:1px;background:#aca899"></div>
<div class="a" style="left:500px;top:244px;width:9px;height:9px;border:1px solid #808080"></div><div class="a" style="left:502px;top:248px;width:5px;height:1px;background:#808080"></div>
<div class="t" style="left:510px;top:244px">четверг</div>
<div class="t" style="left:497px;top:262px;width:99px;text-align:center;letter-spacing:-0.4px">СУММА(Сумма)</div>
<div class="a" style="left:696px;top:241px;width:1px;height:36px;background:#aca899"></div>
<div class="a" style="left:597px;top:258px;width:99px;height:1px;background:#aca899"></div>
<div class="a" style="left:600px;top:244px;width:9px;height:9px;border:1px solid #808080"></div><div class="a" style="left:602px;top:248px;width:5px;height:1px;background:#808080"></div>
<div class="t" style="left:610px;top:244px">пятница</div>
<div class="t" style="left:597px;top:262px;width:99px;text-align:center;letter-spacing:-0.4px">СУММА(Сумма)</div>
<div class="a" style="left:796px;top:241px;width:1px;height:36px;background:#aca899"></div>
<div class="a" style="left:809px;top:241px;width:1px;height:36px;background:#aca899"></div>
<div class="t" style="left:699px;top:244px;line-height:13px">Итого по</div><div class="t" style="left:699px;top:257px;line-height:13px;letter-spacing:-0.4px">СУММА(Сумма)</div>
<div class="a" style="left:196px;top:276px;width:614px;height:1px;background:#716f64"></div>
<div class="a" style="left:697px;top:277px;width:99px;height:324px;background:#fdfce8"></div>
<div class="a" style="left:197px;top:584px;width:599px;height:17px;background:#fdfce8"></div>
<div class="a" style="left:63px;top:277px;width:131px;height:18px;box-shadow:inset 0 1px 0 #f8f6e8,inset -1px 0 0 #f8f6e8,inset 0 -1px 0 #f8f6e8"></div>
<div class="a" style="left:63px;top:295px;width:131px;height:1px;background:#716f64"></div>
<div class="t" style="left:65px;top:281px">"Доминанта"</div>
<div class="a" style="left:197px;top:295px;width:599px;height:1px;background:#ece9d8"></div>
<div class="t r" style="left:197px;top:281px;width:95px">126 500,00</div>
<div class="t r" style="left:297px;top:281px;width:95px">105 175,00</div>
<div class="t r" style="left:497px;top:281px;width:95px">23 000,00</div>
<div class="t r" style="left:697px;top:281px;width:95px">254 675,00</div>
<div class="a" style="left:63px;top:296px;width:131px;height:17px;box-shadow:inset 0 1px 0 #f8f6e8,inset -1px 0 0 #f8f6e8,inset 0 -1px 0 #f8f6e8"></div>
<div class="a" style="left:63px;top:313px;width:131px;height:1px;background:#716f64"></div>
<div class="t" style="left:65px;top:299px">"ИнтерМебель"</div>
<div class="a" style="left:197px;top:313px;width:599px;height:1px;background:#ece9d8"></div>
<div class="t r" style="left:497px;top:299px;width:95px">60 980,00</div>
<div class="t r" style="left:597px;top:299px;width:95px">3 800,00</div>
<div class="t r" style="left:697px;top:299px;width:95px">64 780,00</div>
<div class="a" style="left:63px;top:314px;width:131px;height:17px;box-shadow:inset 0 1px 0 #f8f6e8,inset -1px 0 0 #f8f6e8,inset 0 -1px 0 #f8f6e8"></div>
<div class="a" style="left:63px;top:331px;width:131px;height:1px;background:#716f64"></div>
<div class="t" style="left:65px;top:317px">"Комплект-Сервис"</div>
<div class="a" style="left:197px;top:331px;width:599px;height:1px;background:#ece9d8"></div>
<div class="t r" style="left:497px;top:317px;width:95px">735 400,00</div>
<div class="t r" style="left:697px;top:317px;width:95px">735 400,00</div>
<div class="a" style="left:63px;top:332px;width:131px;height:17px;box-shadow:inset 0 1px 0 #f8f6e8,inset -1px 0 0 #f8f6e8,inset 0 -1px 0 #f8f6e8"></div>
<div class="a" style="left:63px;top:349px;width:131px;height:1px;background:#716f64"></div>
<div class="t" style="left:65px;top:335px">"Л-Мебель"</div>
<div class="a" style="left:197px;top:349px;width:599px;height:1px;background:#ece9d8"></div>
<div class="t r" style="left:597px;top:335px;width:95px">63 000,00</div>
<div class="t r" style="left:697px;top:335px;width:95px">63 000,00</div>
<div class="a" style="left:63px;top:350px;width:131px;height:17px;box-shadow:inset 0 1px 0 #f8f6e8,inset -1px 0 0 #f8f6e8,inset 0 -1px 0 #f8f6e8"></div>
<div class="a" style="left:63px;top:367px;width:131px;height:1px;background:#716f64"></div>
<div class="t" style="left:65px;top:353px">"Мебельный центр"</div>
<div class="a" style="left:197px;top:367px;width:599px;height:1px;background:#ece9d8"></div>
<div class="t r" style="left:597px;top:353px;width:95px">45 700,00</div>
<div class="t r" style="left:697px;top:353px;width:95px">45 700,00</div>
<div class="a" style="left:63px;top:368px;width:131px;height:17px;box-shadow:inset 0 1px 0 #f8f6e8,inset -1px 0 0 #f8f6e8,inset 0 -1px 0 #f8f6e8"></div>
<div class="a" style="left:63px;top:385px;width:131px;height:1px;background:#716f64"></div>
<div class="t" style="left:65px;top:371px">"Находка"</div>
<div class="a" style="left:197px;top:385px;width:599px;height:1px;background:#ece9d8"></div>
<div class="t r" style="left:197px;top:371px;width:95px">57 685,00</div>
<div class="t r" style="left:397px;top:371px;width:95px">416 400,00</div>
<div class="t r" style="left:497px;top:371px;width:95px">88 300,00</div>
<div class="t r" style="left:597px;top:371px;width:95px">162 450,00</div>
<div class="t r" style="left:697px;top:371px;width:95px">724 835,00</div>
<div class="a" style="left:63px;top:386px;width:131px;height:17px;box-shadow:inset 0 1px 0 #f8f6e8,inset -1px 0 0 #f8f6e8,inset 0 -1px 0 #f8f6e8"></div>
<div class="a" style="left:63px;top:403px;width:131px;height:1px;background:#716f64"></div>
<div class="t" style="left:65px;top:389px">Бондаренко Г.Н.</div>
<div class="a" style="left:197px;top:403px;width:599px;height:1px;background:#ece9d8"></div>
<div class="t r" style="left:197px;top:389px;width:95px">9 100,00</div>
<div class="t r" style="left:697px;top:389px;width:95px">9 100,00</div>
<div class="a" style="left:63px;top:404px;width:131px;height:17px;box-shadow:inset 0 1px 0 #f8f6e8,inset -1px 0 0 #f8f6e8,inset 0 -1px 0 #f8f6e8"></div>
<div class="a" style="left:63px;top:421px;width:131px;height:1px;background:#716f64"></div>
<div class="t" style="left:65px;top:407px">Горячева С.А.</div>
<div class="a" style="left:197px;top:421px;width:599px;height:1px;background:#ece9d8"></div>
<div class="t r" style="left:297px;top:407px;width:95px">6 500,00</div>
<div class="t r" style="left:397px;top:407px;width:95px">200 190,00</div>
<div class="t r" style="left:597px;top:407px;width:95px">148 700,00</div>
<div class="t r" style="left:697px;top:407px;width:95px">355 390,00</div>
<div class="a" style="left:63px;top:422px;width:131px;height:17px;box-shadow:inset 0 1px 0 #f8f6e8,inset -1px 0 0 #f8f6e8,inset 0 -1px 0 #f8f6e8"></div>
<div class="a" style="left:63px;top:439px;width:131px;height:1px;background:#716f64"></div>
<div class="t" style="left:65px;top:425px">Кифа В.М.</div>
<div class="a" style="left:197px;top:439px;width:599px;height:1px;background:#ece9d8"></div>
<div class="t r" style="left:497px;top:425px;width:95px">33 000,00</div>
<div class="t r" style="left:697px;top:425px;width:95px">33 000,00</div>
<div class="a" style="left:63px;top:440px;width:131px;height:17px;box-shadow:inset 0 1px 0 #f8f6e8,inset -1px 0 0 #f8f6e8,inset 0 -1px 0 #f8f6e8"></div>
<div class="a" style="left:63px;top:457px;width:131px;height:1px;background:#716f64"></div>
<div class="t" style="left:65px;top:443px">Клиент оптовый</div>
<div class="a" style="left:197px;top:457px;width:599px;height:1px;background:#ece9d8"></div>
<div class="t r" style="left:297px;top:443px;width:95px">25 600,00</div>
<div class="t r" style="left:697px;top:443px;width:95px">25 600,00</div>
<div class="a" style="left:63px;top:458px;width:131px;height:17px;box-shadow:inset 0 1px 0 #f8f6e8,inset -1px 0 0 #f8f6e8,inset 0 -1px 0 #f8f6e8"></div>
<div class="a" style="left:63px;top:475px;width:131px;height:1px;background:#716f64"></div>
<div class="t" style="left:65px;top:461px">Комиссаров Э.В.</div>
<div class="a" style="left:197px;top:475px;width:599px;height:1px;background:#ece9d8"></div>
<div class="t r" style="left:497px;top:461px;width:95px">14 800,00</div>
<div class="t r" style="left:697px;top:461px;width:95px">14 800,00</div>
<div class="a" style="left:63px;top:476px;width:131px;height:17px;box-shadow:inset 0 1px 0 #f8f6e8,inset -1px 0 0 #f8f6e8,inset 0 -1px 0 #f8f6e8"></div>
<div class="a" style="left:63px;top:493px;width:131px;height:1px;background:#716f64"></div>
<div class="t" style="left:65px;top:479px">Лапин А.Н.</div>
<div class="a" style="left:197px;top:493px;width:599px;height:1px;background:#ece9d8"></div>
<div class="t r" style="left:297px;top:479px;width:95px">10 400,00</div>
<div class="t r" style="left:497px;top:479px;width:95px">177 850,00</div>
<div class="t r" style="left:697px;top:479px;width:95px">188 250,00</div>
<div class="a" style="left:63px;top:494px;width:131px;height:17px;box-shadow:inset 0 1px 0 #f8f6e8,inset -1px 0 0 #f8f6e8,inset 0 -1px 0 #f8f6e8"></div>
<div class="a" style="left:63px;top:511px;width:131px;height:1px;background:#716f64"></div>
<div class="t" style="left:65px;top:497px">Рясков И.В.</div>
<div class="a" style="left:197px;top:511px;width:599px;height:1px;background:#ece9d8"></div>
<div class="t r" style="left:297px;top:497px;width:95px">40 000,00</div>
<div class="t r" style="left:697px;top:497px;width:95px">40 000,00</div>
<div class="a" style="left:63px;top:512px;width:131px;height:17px;box-shadow:inset 0 1px 0 #f8f6e8,inset -1px 0 0 #f8f6e8,inset 0 -1px 0 #f8f6e8"></div>
<div class="a" style="left:63px;top:529px;width:131px;height:1px;background:#716f64"></div>
<div class="t" style="left:65px;top:515px">Тимошкин В.А.</div>
<div class="a" style="left:197px;top:529px;width:599px;height:1px;background:#ece9d8"></div>
<div class="t r" style="left:297px;top:515px;width:95px">80 000,00</div>
<div class="t r" style="left:497px;top:515px;width:95px">9 780,00</div>
<div class="t r" style="left:697px;top:515px;width:95px">89 780,00</div>
<div class="a" style="left:63px;top:530px;width:131px;height:17px;box-shadow:inset 0 1px 0 #f8f6e8,inset -1px 0 0 #f8f6e8,inset 0 -1px 0 #f8f6e8"></div>
<div class="a" style="left:63px;top:547px;width:131px;height:1px;background:#716f64"></div>
<div class="t" style="left:65px;top:533px">Торговый дом "Клен"</div>
<div class="a" style="left:197px;top:547px;width:599px;height:1px;background:#ece9d8"></div>
<div class="t r" style="left:197px;top:533px;width:95px">14 300,00</div>
<div class="t r" style="left:697px;top:533px;width:95px">14 300,00</div>
<div class="a" style="left:63px;top:548px;width:131px;height:17px;box-shadow:inset 0 1px 0 #f8f6e8,inset -1px 0 0 #f8f6e8,inset 0 -1px 0 #f8f6e8"></div>
<div class="a" style="left:63px;top:565px;width:131px;height:1px;background:#716f64"></div>
<div class="t" style="left:65px;top:551px">Цветков А.Л.</div>
<div class="a" style="left:197px;top:565px;width:599px;height:1px;background:#ece9d8"></div>
<div class="t r" style="left:497px;top:551px;width:95px">33 810,00</div>
<div class="t r" style="left:597px;top:551px;width:95px">49 300,00</div>
<div class="t r" style="left:697px;top:551px;width:95px">83 110,00</div>
<div class="a" style="left:63px;top:566px;width:131px;height:17px;box-shadow:inset 0 1px 0 #f8f6e8,inset -1px 0 0 #f8f6e8,inset 0 -1px 0 #f8f6e8"></div>
<div class="a" style="left:63px;top:583px;width:131px;height:1px;background:#716f64"></div>
<div class="t" style="left:65px;top:569px">Шарапов А.А.</div>
<div class="a" style="left:197px;top:583px;width:599px;height:1px;background:#ece9d8"></div>
<div class="t r" style="left:197px;top:569px;width:95px">137 375,00</div>
<div class="t r" style="left:297px;top:569px;width:95px">55 000,00</div>
<div class="t r" style="left:497px;top:569px;width:95px">269 170,00</div>
<div class="t r" style="left:597px;top:569px;width:95px">88 000,00</div>
<div class="t r" style="left:697px;top:569px;width:95px">549 545,00</div>
<div class="a" style="left:63px;top:584px;width:131px;height:17px;box-shadow:inset 0 1px 0 #f8f6e8,inset -1px 0 0 #f8f6e8,inset 0 -1px 0 #f8f6e8"></div>
<div class="a" style="left:63px;top:601px;width:131px;height:1px;background:#716f64"></div>
<div class="t" style="left:65px;top:587px">Итого</div>
<div class="a" style="left:197px;top:601px;width:599px;height:1px;background:#ece9d8"></div>
<div class="t r" style="left:197px;top:587px;width:95px">344 960,00</div>
<div class="t r" style="left:297px;top:587px;width:95px">322 675,00</div>
<div class="t r" style="left:397px;top:587px;width:95px">616 590,00</div>
<div class="t r" style="left:497px;top:587px;width:95px">1 446 090,00</div>
<div class="t r" style="left:597px;top:587px;width:95px">560 950,00</div>
<div class="t r" style="left:697px;top:587px;width:95px">3 291 265,00</div>
<div class="a" style="left:296px;top:277px;width:1px;height:324px;background:#ece9d8"></div>
<div class="a" style="left:396px;top:277px;width:1px;height:324px;background:#ece9d8"></div>
<div class="a" style="left:496px;top:277px;width:1px;height:324px;background:#ece9d8"></div>
<div class="a" style="left:596px;top:277px;width:1px;height:324px;background:#ece9d8"></div>
<div class="a" style="left:696px;top:277px;width:1px;height:324px;background:#ece9d8"></div>
<div class="a" style="left:796px;top:277px;width:1px;height:324px;background:#ece9d8"></div>
<div class="a" style="left:63px;top:627px;width:764px;height:1px;background:#aca899"></div>
<div class="a" style="left:809px;top:277px;width:18px;height:350px;background:repeating-conic-gradient(#fff 0 25%,#f2f1ec 0 50%) 0 0/2px 2px;border-left:1px solid #aca899"></div>
<div class="a" style="left:810px;top:277px;width:17px;height:17px;background:#ece9d8;border:1px solid;border-color:#fff #aca899 #aca899 #fff"></div><svg class="a" style="left:814px;top:283px" width="9" height="5"><path d="M0 4.5H9L4.5 0z" fill="#808080"/></svg>
<div class="a" style="left:810px;top:611px;width:17px;height:16px;background:#ece9d8;border:1px solid;border-color:#fff #aca899 #aca899 #fff"></div><svg class="a" style="left:814px;top:617px" width="9" height="5"><path d="M0 0H9L4.5 4.5z" fill="#808080"/></svg>
<div class="a" style="left:196px;top:628px;width:614px;height:17px;background:repeating-conic-gradient(#fff 0 25%,#f2f1ec 0 50%) 0 0/2px 2px"></div>
<div class="a" style="left:197px;top:628px;width:15px;height:17px;background:#ece9d8;border:1px solid;border-color:#fff #aca899 #aca899 #fff"></div><svg class="a" style="left:202px;top:632px" width="5" height="9"><path d="M4.5 0V9L0 4.5z" fill="#808080"/></svg>
<div class="a" style="left:793px;top:628px;width:16px;height:17px;background:#ece9d8;border:1px solid;border-color:#fff #aca899 #aca899 #fff"></div><svg class="a" style="left:799px;top:632px" width="5" height="9"><path d="M0 0V9L4.5 4.5z" fill="#808080"/></svg>
<div class="a" style="left:809px;top:628px;width:18px;height:17px;background:#ece9d8;border-left:1px solid #aca899"></div>
<div class="a" style="left:65px;top:659px;width:97px;height:25px;background:#cfcfcf;border:1px solid #aca899"></div>
<div class="t" style="left:65px;top:666px;width:97px;text-align:center">Закрыть</div>
</body></html>
